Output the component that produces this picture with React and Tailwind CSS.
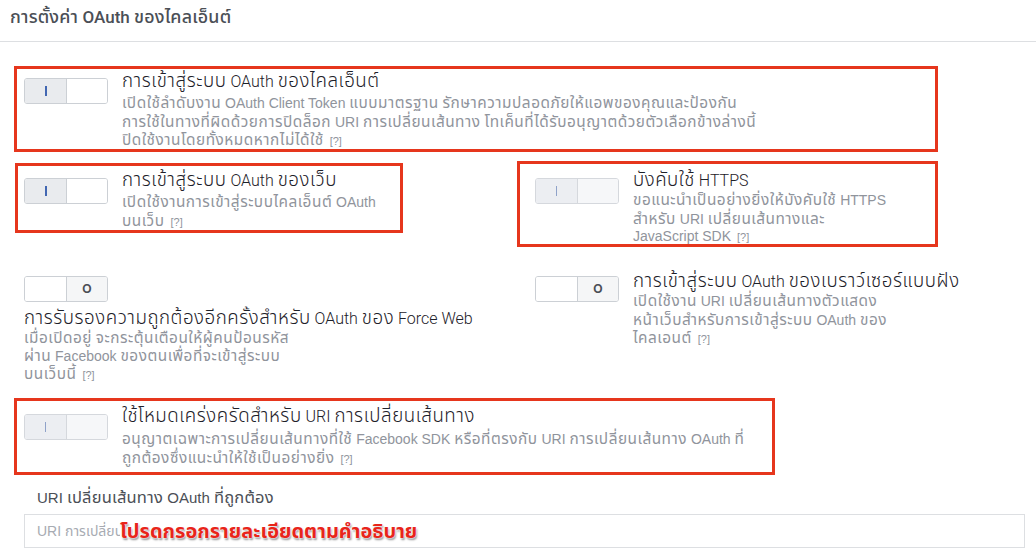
import React from "react";

const FONT = "font-['Liberation_Sans','Noto_Sans_Thai','Noto_Sans',Arial,sans-serif]";

const THAI_RUN = /([\u0E00-\u0E7F]+)/;
const IS_THAI = /^[\u0E00-\u0E7F]+$/;

// Thai runs get their own size and spacing so they sit well next to Latin words.
function Mixed({ text, thai }) {
  return text.split(THAI_RUN).map((part, i) =>
    IS_THAI.test(part) ? (
      <span key={i} className={thai}>
        {part}
      </span>
    ) : (
      <React.Fragment key={i}>{part}</React.Fragment>
    )
  );
}

function Toggle({ state }) {
  if (state === "off") {
    return (
      <div className="flex w-[84px] h-[26px] shrink-0 rounded-[3px] border border-[#ccd0d5] overflow-hidden">
        <div className="w-[42px] bg-white border-r border-[#ccd0d5]" />
        <div className="flex-1 flex items-center justify-center bg-[#f5f6f7] text-[12px] font-bold text-[#4b4f56] leading-none">
          O
        </div>
      </div>
    );
  }
  const muted = state === "muted";
  return (
    <div
      className={
        muted
          ? "flex w-[84px] h-[26px] shrink-0 rounded-[3px] border border-[#d5d8dd] overflow-hidden"
          : "flex w-[84px] h-[26px] shrink-0 rounded-[3px] border border-[#ccd0d5] overflow-hidden"
      }
    >
      <div
        className={
          muted
            ? "w-[42px] flex items-center justify-center bg-[#eceef2] border-r border-[#d5d8dd]"
            : "w-[42px] flex items-center justify-center bg-[#e9ebee] border-r border-[#ccd0d5]"
        }
      >
        <div className={muted ? "w-[1.5px] h-[10px] bg-[#8fa2c9]" : "w-[2px] h-[10px] bg-[#4267b2]"} />
      </div>
      <div className={muted ? "flex-1 bg-[#f6f7f9]" : "flex-1 bg-white"} />
    </div>
  );
}

function Help() {
  return <span className="ml-[6px] text-[11px] text-[#90949c]">[?]</span>;
}

function Title({ text }) {
  return (
    <div className="font-['Roboto','Noto_Sans_Thai',sans-serif] text-[16px] font-light leading-[20px] text-[#1d2129] whitespace-nowrap">
      <Mixed text={text} thai="text-[1.17em] tracking-[0.55px]" />
    </div>
  );
}

function Desc({ lines, className = "" }) {
  return (
    <div className={"text-[14px] leading-[17.5px] text-[#90949c] whitespace-nowrap " + className}>
      {lines.map((line, i) => (
        <div key={i}>
          <Mixed text={line} thai="text-[1.1em] tracking-[0.5px]" />
          {i === lines.length - 1 && <Help />}
        </div>
      ))}
    </div>
  );
}

export default function App() {
  return (
    <div className={"w-[1036px] h-[560px] overflow-hidden bg-white " + FONT}>
      {/* section header */}
      <div className="h-[42px] border-b border-[#dddfe2] pl-[10px] pb-[6px] flex items-center">
        <span className="font-['Roboto','Noto_Sans_Thai',sans-serif] text-[17px] font-medium text-[#4b4f56]">
          <Mixed text="การตั้งค่า OAuth ของไคลเอ็นต์" thai="text-[1.05em] tracking-[0.2px]" />
        </span>
      </div>

      <div className="pl-[14px]">
        {/* client OAuth login */}
        <div className="mt-[24px] w-[924px] h-[86px] border-[3px] border-[#e6361d] flex items-start pl-[7px]">
          <div className="mt-[9px]">
            <Toggle state="on" />
          </div>
          <div className="ml-[14px] pt-[2px]">
            <Title text="การเข้าสู่ระบบ OAuth ของไคลเอ็นต์" />
            <Desc
              className="mt-[2px]"
              lines={[
                "เปิดใช้ลำดับงาน OAuth Client Token แบบมาตรฐาน รักษาความปลอดภัยให้แอพของคุณและป้องกัน",
                "การใช้ในทางที่ผิดด้วยการปิดล็อก URI การเปลี่ยนเส้นทาง โทเค็นที่ได้รับอนุญาตด้วยตัวเลือกข้างล่างนี้",
                "ปิดใช้งานโดยทั้งหมดหากไม่ได้ใช้",
              ]}
            />
          </div>
        </div>

        {/* web OAuth login + enforce HTTPS */}
        <div className="mt-[9px] flex items-start">
          <div className="mt-[2px] ml-[1px] w-[388px] h-[70px] border-[3px] border-[#e6361d] flex items-start pl-[6px]">
            <div className="mt-[12px]">
              <Toggle state="on" />
            </div>
            <div className="ml-[14px] pt-[4px]">
              <Title text="การเข้าสู่ระบบ OAuth ของเว็บ" />
              <Desc className="mt-[2px]" lines={["เปิดใช้งานการเข้าสู่ระบบไคลเอ็นต์ OAuth", "บนเว็บ"]} />
            </div>
          </div>

          <div className="ml-[114px] w-[421px] h-[86px] border-[3px] border-[#e6361d] flex items-start pl-[15px]">
            <div className="mt-[14px]">
              <Toggle state="muted" />
            </div>
            <div className="ml-[14px] pt-[6px]">
              <Title text="บังคับใช้ HTTPS" />
              <Desc
                lines={[
                  "ขอแนะนำเป็นอย่างยิ่งให้บังคับใช้ HTTPS",
                  "สำหรับ URI เปลี่ยนเส้นทางและ",
                  "JavaScript SDK",
                ]}
              />
            </div>
          </div>
        </div>

        {/* reauth + embedded browser */}
        <div className="mt-[24px] flex items-start">
          <div className="w-[521px] pl-[10px]">
            <div className="mt-[5px]">
              <Toggle state="off" />
            </div>
            <div className="mt-[6px]">
              <Title text="การรับรองความถูกต้องอีกครั้งสำหรับ OAuth ของ Force Web" />
              <Desc
                className="leading-[18px]"
                lines={[
                  "เมื่อเปิดอยู่ จะกระตุ้นเตือนให้ผู้คนป้อนรหัส",
                  "ผ่าน Facebook ของตนเพื่อที่จะเข้าสู่ระบบ",
                  "บนเว็บนี้",
                ]}
              />
            </div>
          </div>
          <div className="flex items-start">
            <div className="mt-[5px]">
              <Toggle state="off" />
            </div>
            <div className="ml-[14px]">
              <Title text="การเข้าสู่ระบบ OAuth ของเบราว์เซอร์แบบฝัง" />
              <Desc
                lines={[
                  "เปิดใช้งาน URI เปลี่ยนเส้นทางตัวแสดง",
                  "หน้าเว็บสำหรับการเข้าสู่ระบบ OAuth ของ",
                  "ไคลเอนต์",
                ]}
              />
            </div>
          </div>
        </div>

        {/* strict mode */}
        <div className="mt-[14px] w-[761px] h-[77px] border-[3px] border-[#e6361d] flex items-start pl-[7px]">
          <div className="mt-[13px]">
            <Toggle state="muted" />
          </div>
          <div className="ml-[14px] pt-[5px]">
            <Title text="ใช้โหมดเคร่งครัดสำหรับ URI การเปลี่ยนเส้นทาง" />
            <Desc
              className="mt-[3px] leading-[18.5px]"
              lines={[
                "อนุญาตเฉพาะการเปลี่ยนเส้นทางที่ใช้ Facebook SDK หรือที่ตรงกับ URI การเปลี่ยนเส้นทาง OAuth ที่",
                "ถูกต้องซึ่งแนะนำให้ใช้เป็นอย่างยิ่ง",
              ]}
            />
          </div>
        </div>

        {/* redirect URI field */}
        <div className="mt-[12px] pl-[10px]">
          <div className="pl-[13px] text-[15px] leading-[20px] text-[#4b4f56]">
            <Mixed text="URI เปลี่ยนเส้นทาง OAuth ที่ถูกต้อง" thai="text-[1.1em] tracking-[0.2px]" />
          </div>
          <div className="mt-[6px] w-[1001px] h-[34px] border border-[#dddfe2] flex items-center pl-[12px] overflow-hidden">
            <span className="w-[83px] shrink-0 overflow-hidden whitespace-nowrap text-[14px] text-[#a7abb2]">
              URI การเปลี่ยนเส้นทาง OAuth ที่ถูกต้อง
            </span>
            <span className="whitespace-nowrap text-[20px] font-bold leading-[26px] text-[#e8251a] [text-shadow:0_0_2px_#fff,0_0_2px_#fff,1px_2px_2px_rgba(0,0,0,0.45)]">
              โปรดกรอกรายละเอียดตามคำอธิบาย
            </span>
          </div>
        </div>
      </div>
    </div>
  );
}
